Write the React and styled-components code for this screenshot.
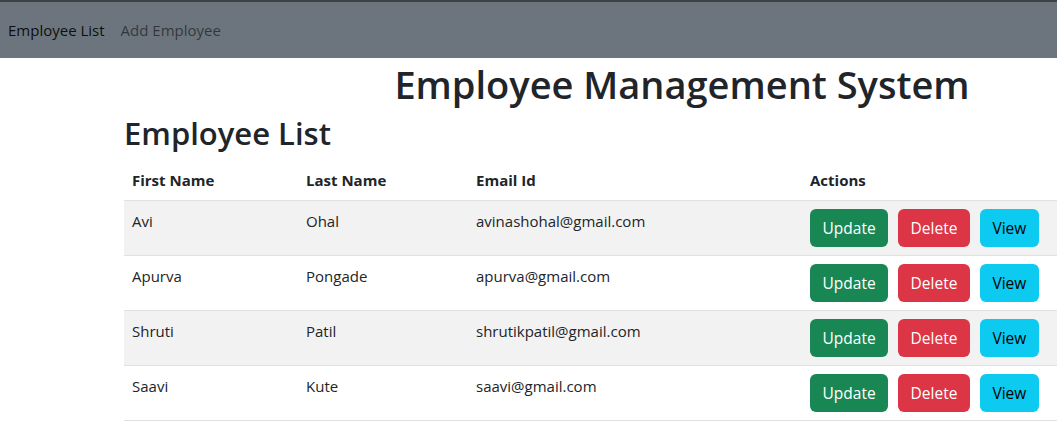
import React from 'react';
import styled, { createGlobalStyle } from 'styled-components';

const GlobalStyle = createGlobalStyle`
  *, *::before, *::after {
    box-sizing: border-box;
  }
  html, body {
    margin: 0;
    padding: 0;
    overflow: hidden;
    background: #fff;
  }
  body {
    font-family: "Open Sans", "Noto Sans", sans-serif;
    font-size: 16px;
    line-height: 1.5;
    color: #212529;
  }
`;

const Page = styled.div`
  width: 1364px;
`;

const NavBar = styled.nav`
  display: flex;
  align-items: center;
  height: 58px;
  padding: 0 8px;
  background: #6c757d;
  border-top: 2px solid #3d4247;
`;

const NavLink = styled.a`
  margin-right: 16px;
  font-size: 15px;
  color: ${(p) => (p.active ? 'rgba(0,0,0,0.9)' : 'rgba(0,0,0,0.55)')};
  text-decoration: none;
  cursor: pointer;
`;

const Container = styled.div`
  max-width: 1116px;
  margin: 0 auto;
`;

const Title = styled.h1`
  margin: 2px 0 0;
  text-align: center;
  font-size: 38px;
  font-weight: 600;
  line-height: 48px;
`;

const SubTitle = styled.h2`
  margin: 6px 0 0;
  font-size: 31px;
  font-weight: 600;
  line-height: 38px;
`;

const Table = styled.table`
  width: 100%;
  margin-top: 9px;
  border-collapse: collapse;
  table-layout: fixed;
`;

const HeadCell = styled.th`
  width: ${(p) => p.w}px;
  padding: 8px;
  text-align: left;
  font-size: 15px;
  font-weight: 700;
  border-bottom: 1px solid #dee2e6;
`;

const Row = styled.tr`
  background: ${(p) => (p.striped ? '#f2f2f2' : '#fff')};
  border-bottom: 1px solid #dee2e6;
`;

const Cell = styled.td`
  padding: 9px 8px 8px;
  vertical-align: top;
  font-size: 15px;
`;

const Actions = styled.div`
  display: flex;
  gap: 10px;
  margin-top: -1px;
`;

const Button = styled.button`
  height: 38px;
  padding: 0 12.5px;
  border: none;
  border-radius: 6px;
  font-family: inherit;
  font-size: 15.5px;
  color: ${(p) => (p.variant === 'info' ? '#000' : '#fff')};
  background: ${(p) =>
    p.variant === 'success' ? '#198754' : p.variant === 'danger' ? '#dc3545' : '#0dcaf0'};
  cursor: pointer;
`;

const employees = [
  { first: 'Avi', last: 'Ohal', email: 'avinashohal@gmail.com' },
  { first: 'Apurva', last: 'Pongade', email: 'apurva@gmail.com' },
  { first: 'Shruti', last: 'Patil', email: 'shrutikpatil@gmail.com' },
  { first: 'Saavi', last: 'Kute', email: 'saavi@gmail.com' },
];

export default function App() {
  return (
    <Page>
      <GlobalStyle />
      <NavBar>
        <NavLink active>Employee List</NavLink>
        <NavLink>Add Employee</NavLink>
      </NavBar>
      <Container>
        <Title>Employee Management System</Title>
        <SubTitle>Employee List</SubTitle>
        <Table>
          <thead>
            <tr>
              <HeadCell w={174}>First Name</HeadCell>
              <HeadCell w={170}>Last Name</HeadCell>
              <HeadCell w={334}>Email Id</HeadCell>
              <HeadCell w={438}>Actions</HeadCell>
            </tr>
          </thead>
          <tbody>
            {employees.map((e, i) => (
              <Row key={e.email} striped={i % 2 === 0}>
                <Cell>{e.first}</Cell>
                <Cell>{e.last}</Cell>
                <Cell>{e.email}</Cell>
                <Cell>
                  <Actions>
                    <Button variant="success">Update</Button>
                    <Button variant="danger">Delete</Button>
                    <Button variant="info">View</Button>
                  </Actions>
                </Cell>
              </Row>
            ))}
          </tbody>
        </Table>
      </Container>
    </Page>
  );
}
